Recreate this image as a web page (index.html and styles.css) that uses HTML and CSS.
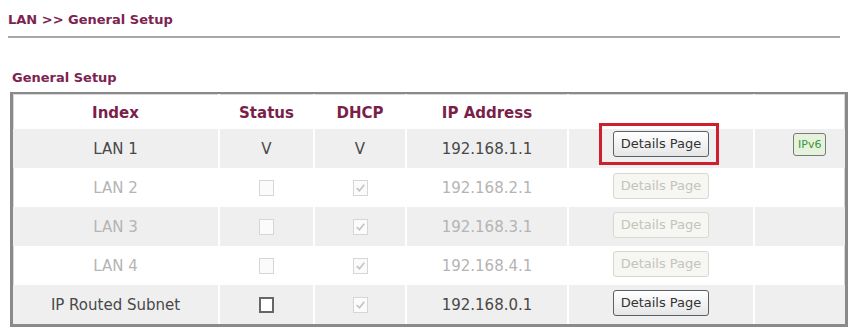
FILE: index.html
```html
<!DOCTYPE html>
<html lang="en">
<head>
  <meta charset="UTF-8" />
  <title>LAN &gt;&gt; General Setup</title>
  <link rel="stylesheet" href="styles.css">
</head>
<body>
  <h1 class="page-title">LAN &gt;&gt; General Setup</h1>
  <div class="rule"></div>

  <h2 class="section-title">General Setup</h2>
  <table class="lan-table">
    <colgroup>
      <col class="c-index">
      <col class="c-status">
      <col class="c-dhcp">
      <col class="c-ip">
      <col class="c-details">
      <col class="c-v6">
    </colgroup>
    <tr class="head">
      <th>Index</th>
      <th>Status</th>
      <th>DHCP</th>
      <th>IP Address</th>
      <th></th>
      <th></th>
    </tr>
    <tr class="shade">
      <td>LAN 1</td>
      <td>V</td>
      <td>V</td>
      <td>192.168.1.1</td>
      <td>
        <span class="mark-wrap">
          <button class="btn">Details Page</button>
          <span class="mark"></span>
        </span>
      </td>
      <td class="v6-cell"><button class="btn-v6">IPv6</button></td>
    </tr>
    <tr class="off">
      <td>LAN 2</td>
      <td><span class="box"></span></td>
      <td><span class="box checked"><svg viewBox="0 0 12 12"><polyline points="2.5,6 5,8.5 9.5,3"/></svg></span></td>
      <td>192.168.2.1</td>
      <td><button class="btn" disabled>Details Page</button></td>
      <td></td>
    </tr>
    <tr class="off shade">
      <td>LAN 3</td>
      <td><span class="box"></span></td>
      <td><span class="box checked"><svg viewBox="0 0 12 12"><polyline points="2.5,6 5,8.5 9.5,3"/></svg></span></td>
      <td>192.168.3.1</td>
      <td><button class="btn" disabled>Details Page</button></td>
      <td></td>
    </tr>
    <tr class="off">
      <td>LAN 4</td>
      <td><span class="box"></span></td>
      <td><span class="box checked"><svg viewBox="0 0 12 12"><polyline points="2.5,6 5,8.5 9.5,3"/></svg></span></td>
      <td>192.168.4.1</td>
      <td><button class="btn" disabled>Details Page</button></td>
      <td></td>
    </tr>
    <tr class="shade">
      <td>IP Routed Subnet</td>
      <td><span class="box live"></span></td>
      <td><span class="box checked"><svg viewBox="0 0 12 12"><polyline points="2.5,6 5,8.5 9.5,3"/></svg></span></td>
      <td>192.168.0.1</td>
      <td><button class="btn">Details Page</button></td>
      <td></td>
    </tr>
  </table>
</body>
</html>
```

FILE: styles.css
```css
body {
  margin: 0 5px 0 8px;
  font-family: "DejaVu Sans", Verdana, sans-serif;
  background: #fff;
}
.page-title {
  margin: 12px 0 0;
  font-size: 13px;
  line-height: 16px;
  color: #7d2352;
}
.rule {
  margin: 8px 8px 0 0;
  height: 2px;
  background: #a8a8a8;
}
.section-title {
  margin: 32px 0 0 4px;
  font-size: 13px;
  line-height: 16px;
  color: #7d2352;
}
.lan-table {
  margin: 6px 0 0 2px;
  width: 838px;
  table-layout: fixed;
  border-collapse: separate;
  border-spacing: 0;
  border: 3px solid #8a8a8a;
  border-top-width: 2px;
  box-shadow: inset 0 0 0 1px #d8d8d8;
  font-size: 15px;
}
.c-index { width: 205px; }
.c-status { width: 95px; }
.c-dhcp { width: 92px; }
.c-ip { width: 162px; }
.c-details { width: 186px; }
.c-v6 { width: 92px; }

.lan-table th,
.lan-table td {
  padding: 0;
  text-align: center;
  vertical-align: middle;
}
.lan-table th + th,
.lan-table td + td {
  border-left: 2px solid #fff;
}
.head th {
  height: 33px;
  padding-top: 2px;
  color: #7a1f4a;
  font-size: 15px;
  font-weight: bold;
}
.lan-table td {
  height: 39px;
  color: #484848;
}
.shade td {
  background: #efefef;
}
.off td {
  color: #b4b4b4;
}

.box {
  display: inline-block;
  width: 13px;
  height: 14px;
  border: 1px solid #d6d6d6;
  background: #fbfbfb;
  vertical-align: middle;
}
.box.live {
  border: 2px solid #666;
  width: 11px;
  height: 12px;
  background: #fff;
}
.box svg {
  display: block;
  width: 13px;
  height: 14px;
}
.box polyline {
  fill: none;
  stroke: #c4c4c4;
  stroke-width: 1.6;
}

.btn {
  font-family: "DejaVu Sans", Verdana, sans-serif;
  font-size: 13px;
  line-height: 16px;
  padding: 4px 7px;
  margin: 0;
  border: 1px solid #58606a;
  border-radius: 3px;
  background: linear-gradient(#ffffff, #e6e6e6);
  color: #333;
  position: relative;
  top: -2px;
}
.btn:disabled {
  border-color: #d8d8d0;
  background: #f6f6f2;
  color: #c4c4bc;
}
.mark-wrap {
  position: relative;
  top: -3px;
  display: inline-block;
}
.mark {
  position: absolute;
  left: -14px;
  right: -10px;
  top: -10px;
  bottom: -6px;
  border: 3px solid #cf1f2c;
}
.lan-table .v6-cell {
  text-align: left;
  padding-left: 38px;
}
.btn-v6 {
  font-family: "DejaVu Sans", Verdana, sans-serif;
  font-size: 11px;
  line-height: 14px;
  padding: 4px 4px 3px;
  margin: 0;
  border: 1px solid #7a7a7a;
  border-radius: 3px;
  background: #e6f3dc;
  color: #3e9440;
  position: relative;
  top: -4px;
}
```
